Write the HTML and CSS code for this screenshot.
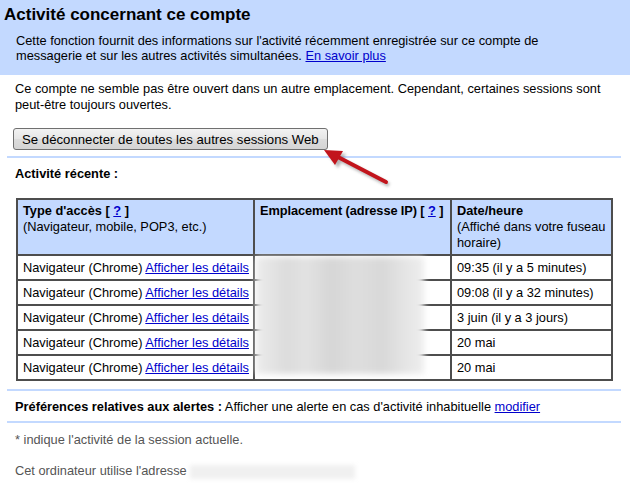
FILE: index.html
```html
<!DOCTYPE html>
<html lang="fr">
<head>
<meta charset="UTF-8" />
<title>Activité concernant ce compte</title>
<link rel="stylesheet" href="styles.css">
</head>
<body>

<div class="page">
  <div class="header">
    <h1>Activité concernant ce compte</h1>
    <p class="intro">Cette fonction fournit des informations sur l'activité récemment enregistrée sur ce compte de messagerie et sur les autres activités simultanées. <a href="#">En savoir plus</a></p>
  </div>

  <div class="section">
    <p class="status">Ce compte ne semble pas être ouvert dans un autre emplacement. Cependant, certaines sessions sont peut-être toujours ouvertes.</p>
    <button class="signout">Se déconnecter de toutes les autres sessions Web</button>
  </div>

  <div class="sep"></div>

  <div class="section">
    <h2>Activité récente :</h2>
    <div class="table-wrap">
      <table class="activity">
        <tr>
          <th class="col-type"><b>Type d'accès [ <a href="#">?</a> ]</b><br>(Navigateur, mobile, POP3, etc.)</th>
          <th class="col-ip"><b>Emplacement (adresse IP) [ <a href="#">?</a> ]</b></th>
          <th class="col-date"><b>Date/heure</b><br>(Affiché dans votre fuseau horaire)</th>
        </tr>
        <tr><td>Navigateur (Chrome) <a href="#">Afficher les détails</a></td><td></td><td>09:35 (il y a 5 minutes)</td></tr>
        <tr><td>Navigateur (Chrome) <a href="#">Afficher les détails</a></td><td></td><td>09:08 (il y a 32 minutes)</td></tr>
        <tr><td>Navigateur (Chrome) <a href="#">Afficher les détails</a></td><td></td><td>3 juin (il y a 3 jours)</td></tr>
        <tr><td>Navigateur (Chrome) <a href="#">Afficher les détails</a></td><td></td><td>20 mai</td></tr>
        <tr><td>Navigateur (Chrome) <a href="#">Afficher les détails</a></td><td></td><td>20 mai</td></tr>
      </table>
      <div class="redact redact-ip"></div>
    </div>
  </div>

  <div class="sep sep-low"></div>
  <p class="prefs"><b>Préférences relatives aux alertes :</b> Afficher une alerte en cas d'activité inhabituelle <a href="#">modifier</a></p>
  <div class="sep"></div>

  <p class="note note-first">* indique l'activité de la session actuelle.</p>
  <p class="note note-ip">Cet ordinateur utilise l'adresse <span class="redact-addr"></span></p>

  <svg class="arrow" width="630" height="491" viewBox="0 0 630 491">
    <defs>
      <filter id="shadow" x="-20%" y="-20%" width="140%" height="140%">
        <feGaussianBlur stdDeviation="1.6" />
      </filter>
    </defs>
    <g transform="translate(3,3)" fill="#777" stroke="#777" opacity="0.55" filter="url(#shadow)">
      <line x1="386" y1="182" x2="336" y2="156" stroke-width="4" />
      <polygon points="324,150 343,151 335,165" stroke="none" />
    </g>
    <line x1="386" y1="182" x2="336" y2="156" stroke="#c2141c" stroke-width="4" stroke-linecap="round" />
    <polygon points="324,150 343,151 335,165" fill="#c2141c" />
  </svg>
</div>

</body>
</html>
```

FILE: styles.css
```css
body {
  margin: 0;
  font-family: "Liberation Sans", Arial, sans-serif;
  font-size: 12.8px;
  color: #000;
  background: #fff;
}
a {
  color: #0000cc;
}
.page {
  position: relative;
  width: 630px;
  height: 491px;
  overflow: hidden;
}
.header {
  background: #c3d9ff;
  height: 75px;
  padding: 5px 0 0 4px;
  box-sizing: border-box;
}
h1 {
  margin: 0;
  font-size: 17px;
  line-height: 20px;
  font-weight: bold;
}
.intro {
  margin: 8px 0 0 12px;
  width: 545px;
  line-height: 15px;
}
.section {
  padding: 0 15px;
}
.status {
  margin: 6px 0 0;
  line-height: 16px;
}
.signout {
  margin: 15px 0 0 -2px;
  height: 22px;
  padding: 0 8px;
  font-family: "Liberation Sans", Arial, sans-serif;
  font-size: 13.2px;
  color: #000;
  background: linear-gradient(#f2f2f2, #e6e6e6 50%, #dcdcdc 51%, #d4d4d4);
  border: 1px solid #707070;
  border-radius: 3px;
}
.sep {
  margin: 6px 0 0 7px;
  width: 614px;
  height: 2px;
  background: #c3d9ff;
}
h2 {
  margin: 8px 0 0;
  font-size: 12.8px;
  line-height: 16px;
}
.table-wrap {
  position: relative;
  margin: 16px 0 0 1px;
  width: 596px;
}
.activity {
  border-collapse: collapse;
  width: 596px;
  table-layout: fixed;
}
.activity th,
.activity td {
  border: 2px solid #4d4d4d;
  text-align: left;
  vertical-align: top;
  line-height: 16px;
  white-space: nowrap;
}
.activity th {
  background: #c3d9ff;
  font-weight: normal;
  padding: 3px 4px 3px 5px;
  height: 48px;
  white-space: normal;
}
.activity th.col-ip {
  white-space: nowrap;
  letter-spacing: -0.1px;
}
.activity td {
  padding: 4px 4px 3px 5px;
}
.col-type { width: 226px; }
.col-ip { width: 186px; }
.col-date { width: 150px; }
.redact {
  position: absolute;
  filter: blur(3px);
}
.redact-ip {
  left: 240px;
  top: 59px;
  width: 168px;
  height: 117px;
  background:
    linear-gradient(90deg, #ececec 0%, #dcdcdc 18%, #e2e2e2 30%, #d6d6d6 45%, #dedede 60%, #d8d8d8 75%, #e6e6e6 90%, #eeeeee 100%);
}
.prefs {
  margin: 0;
  padding: 8px 15px 0;
  line-height: 16px;
}
.sep-low {
  margin-top: 8px;
}
.note {
  margin: 0;
  padding: 0 15px;
  color: #555;
  line-height: 16px;
}
.note-first {
  margin-top: 9px;
}
.note-ip {
  margin-top: 15px;
}
.redact-addr {
  display: inline-block;
  vertical-align: middle;
  width: 165px;
  height: 14px;
  background: #f0f0f0;
  filter: blur(2px);
}
.arrow {
  position: absolute;
  left: 0;
  top: 0;
  pointer-events: none;
}
```
